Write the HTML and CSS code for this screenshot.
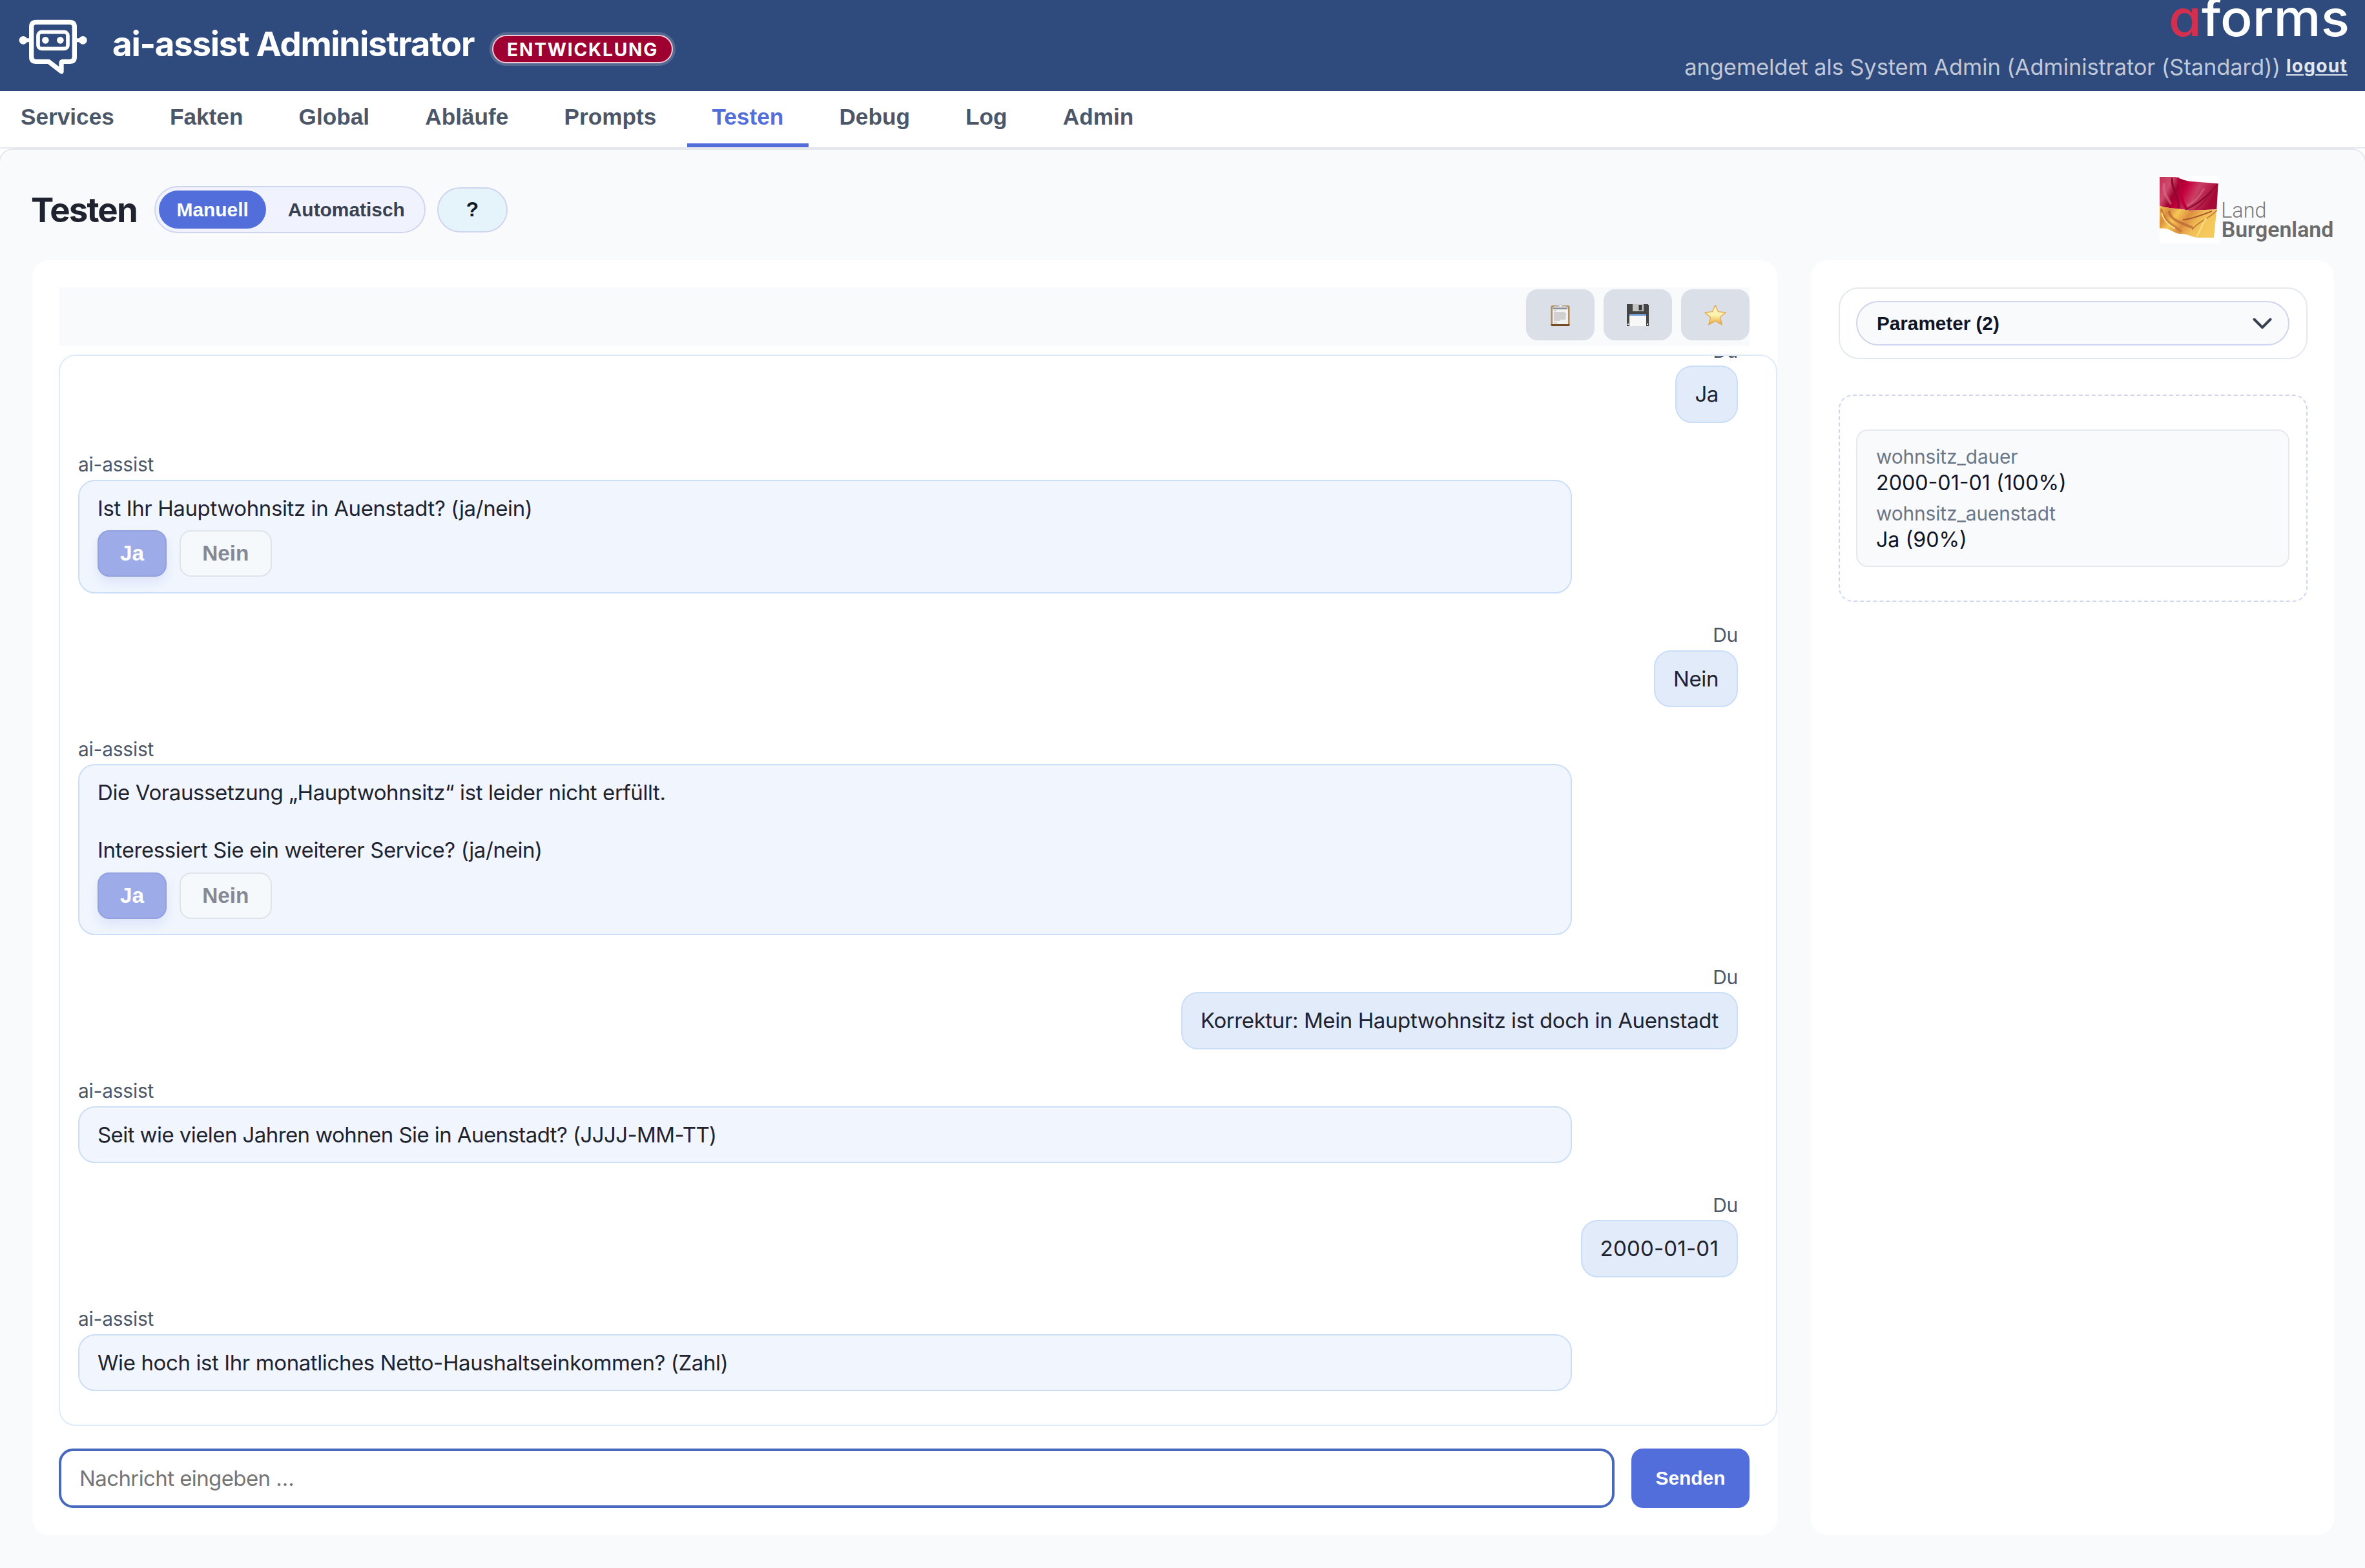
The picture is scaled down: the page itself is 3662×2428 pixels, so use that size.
FILE: index.html
```html
<!DOCTYPE html>
<html lang="de">
  <head>
    <meta charset="UTF-8" />
    <meta name="viewport" content="width=device-width, initial-scale=1.0" />
    <title>ai-assist Administrator</title>
    <link rel="stylesheet" href="styles.css" />
  </head>
  <body>
    <header class="header">
      <div class="brand">
        <svg class="brand-logo" viewBox="0 0 420 330" fill="none" stroke="#fff">
          <path
            d="M108 55H264Q286 55 286 77V216Q286 238 264 238H232Q225 238 225 245V284L166 238H108Q86 238 86 216V77Q86 55 108 55Z"
            stroke-width="22"
            stroke-linejoin="round"
          />
          <rect x="117" y="101" width="138" height="77" rx="16" stroke-width="17" />
          <path d="M47 139H86M286 139H325" stroke-width="18" />
          <g fill="#fff" stroke="none">
            <circle cx="48" cy="139" r="19" />
            <circle cx="325" cy="139" r="19" />
            <circle cx="151" cy="139" r="16" />
            <circle cx="220" cy="139" r="16" />
          </g>
        </svg>
        <h1 class="brand-title">ai-assist Administrator</h1>
        <span class="env-badge">ENTWICKLUNG</span>
      </div>
      <div class="user-area">
        <svg class="aforms-logo" viewBox="0 0 274 57">
          <text x="-3" y="56" textLength="280" lengthAdjust="spacingAndGlyphs">
            <tspan class="aforms-a">a</tspan>forms</text>
        </svg>
        <div class="user-info">
          <span>angemeldet als System Admin (Administrator (Standard))</span>
          <a class="logout" href="#">logout</a>
        </div>
      </div>
    </header>

    <nav class="nav">
      <a class="nav-item" href="#">Services</a>
      <a class="nav-item" href="#">Fakten</a>
      <a class="nav-item" href="#">Global</a>
      <a class="nav-item" href="#">Abläufe</a>
      <a class="nav-item" href="#">Prompts</a>
      <a class="nav-item active" href="#">Testen</a>
      <a class="nav-item" href="#">Debug</a>
      <a class="nav-item" href="#">Log</a>
      <a class="nav-item" href="#">Admin</a>
    </nav>

    <main class="main">
      <div class="page-head">
        <h2 class="page-title">Testen</h2>
        <div class="mode-switch">
          <button class="mode active">Manuell</button>
          <button class="mode">Automatisch</button>
        </div>
        <button class="help">?</button>
        <svg class="land-logo" viewBox="0 0 810 315">
          <defs>
            <linearGradient id="red" x1="0" y1="0" x2="1" y2="0.3">
              <stop offset="0" stop-color="#c23059" />
              <stop offset="0.22" stop-color="#cf4a6c" />
              <stop offset="0.36" stop-color="#a0022f" />
              <stop offset="0.5" stop-color="#c5003f" />
              <stop offset="0.7" stop-color="#ca3f63" />
              <stop offset="1" stop-color="#a80a38" />
            </linearGradient>
            <linearGradient id="gold" x1="0" y1="0" x2="1" y2="0.4">
              <stop offset="0" stop-color="#f3c450" />
              <stop offset="0.2" stop-color="#d98d3e" />
              <stop offset="0.35" stop-color="#f6c754" />
              <stop offset="0.55" stop-color="#dc8f40" />
              <stop offset="0.75" stop-color="#f0bd55" />
              <stop offset="1" stop-color="#f5c95c" />
            </linearGradient>
          </defs>
          <rect width="280" height="315" fill="#fff" />
          <path d="M0 6H72C98 12 108 22 140 26L272 37L265 157L138 162C80 150 30 152 0 140Z" fill="url(#red)" />
          <path d="M0 140C30 152 80 150 138 162L265 157L252 288H182C140 284 130 268 90 270C55 262 45 240 0 245Z" fill="url(#gold)" />
          <g fill="none" stroke-linecap="round">
            <path d="M58 14C52 62 92 92 88 150" stroke="#8e0830" stroke-width="9" />
            <path d="M85 14C110 70 90 100 122 150" stroke="#b8003a" stroke-width="12" />
            <path d="M268 42C230 84 200 118 124 156" stroke="#8b0a30" stroke-width="7" />
            <path d="M255 55C220 110 190 140 168 156" stroke="#9a1038" stroke-width="5" />
            <path d="M205 62C190 90 165 120 130 138" stroke="#d4708a" stroke-width="8" opacity="0.6" />
            <path d="M20 40C15 80 35 100 50 128" stroke="#d4708a" stroke-width="12" opacity="0.6" />
            <path d="M240 166C180 190 150 200 110 205" stroke="#a5532d" stroke-width="6" />
            <path d="M265 162C225 205 180 210 152 250" stroke="#c47336" stroke-width="5" />
            <path d="M8 158C20 215 60 225 98 258" stroke="#c0703a" stroke-width="12" opacity="0.7" />
            <path d="M45 170C50 200 85 215 150 240" stroke="#b86236" stroke-width="12" opacity="0.7" />
            <path d="M10 175C20 210 40 228 70 245" stroke="#fbe08a" stroke-width="6" />
            <path d="M215 200C200 225 190 250 175 278" stroke="#fadb7c" stroke-width="8" />
          </g>
          <text class="land" x="286" y="194" textLength="210" lengthAdjust="spacingAndGlyphs">Land</text>
          <text class="burgenland" x="287" y="285" textLength="521" lengthAdjust="spacingAndGlyphs">Burgenland</text>
        </svg>
      </div>

      <div class="panels">
        <section class="panel chat-panel">
          <div class="toolbar">
            <button class="tool" title="Kopieren">
              <svg class="tool-icon" viewBox="0 0 36 36">
                <rect x="3.5" y="3" width="29" height="32" rx="2.5" fill="#b48a58" />
                <path d="M3.5 32H32.5V33Q32.5 35 30.5 35H5.5Q3.5 35 3.5 33Z" fill="#77491f" />
                <rect x="6" y="6" width="24" height="26" fill="#f1f1f1" />
                <path d="M8 11H12M8 14H25M8 16H27M8 18H27M8 20H26M8 22H27M8 24H26M8 26H18M8 30H13" stroke="#c6c6c6" stroke-width="1.4" />
                <path d="M7 8V6.5Q7 4 10 4H14Q18 -2 22 4H26Q29 4 29 6.5V8Z" fill="#c3c7cc" />
                <path d="M7 8H29" stroke="#777" stroke-width="1.5" />
                <circle cx="18" cy="3.4" r="1.5" fill="#fff" />
              </svg>
            </button>
            <button class="tool" title="Speichern">
              <svg class="tool-icon" viewBox="0 0 36 36">
                <path d="M1 1H33.5L35 2.5V35H1Z" fill="#454545" />
                <rect x="10" y="1" width="17" height="11" fill="#c4c4c4" />
                <rect x="19.5" y="2" width="5" height="8.5" fill="#3b3b3b" />
                <rect x="5" y="16" width="26" height="19" fill="#f7f7f7" />
                <path d="M5 17.5H31" stroke="#5f8fce" stroke-width="2.5" />
                <path d="M2 32H4M32 32H34" stroke="#eee" stroke-width="2" />
              </svg>
            </button>
            <button class="tool" title="Favorit">
              <svg class="tool-icon" viewBox="0 0 36 36">
                <defs>
                  <linearGradient id="star" x1="0" y1="0" x2="0" y2="1">
                    <stop offset="0" stop-color="#fdf3c0" />
                    <stop offset="0.5" stop-color="#fdf4ae" />
                    <stop offset="1" stop-color="#e8a33c" />
                  </linearGradient>
                </defs>
                <path
                  d="M18 2.5L22.4 12.6L34.2 13.8L25.4 21.4L28.3 33L18 27L7.7 33L10.6 21.4L1.8 13.8L13.6 12.6Z"
                  fill="url(#star)"
                  stroke="#e3a550"
                  stroke-width="1.3"
                  stroke-linejoin="round"
                />
              </svg>
            </button>
          </div>

          <div class="chat">
            <div class="msg user">
              <span class="sender">Du</span>
              <div class="bubble">Ja</div>
            </div>
            <div class="msg bot">
              <span class="sender">ai-assist</span>
              <div class="bubble">
                <p>Ist Ihr Hauptwohnsitz in Auenstadt? (ja/nein)</p>
                <div class="answers">
                  <button class="answer yes" disabled>Ja</button>
                  <button class="answer no" disabled>Nein</button>
                </div>
              </div>
            </div>
            <div class="msg user">
              <span class="sender">Du</span>
              <div class="bubble">Nein</div>
            </div>
            <div class="msg bot">
              <span class="sender">ai-assist</span>
              <div class="bubble">
                <p>Die Voraussetzung „Hauptwohnsitz“ ist leider nicht erfüllt.<br /><br />Interessiert Sie ein weiterer Service? (ja/nein)</p>
                <div class="answers">
                  <button class="answer yes" disabled>Ja</button>
                  <button class="answer no" disabled>Nein</button>
                </div>
              </div>
            </div>
            <div class="msg user">
              <span class="sender">Du</span>
              <div class="bubble">Korrektur: Mein Hauptwohnsitz ist doch in Auenstadt</div>
            </div>
            <div class="msg bot">
              <span class="sender">ai-assist</span>
              <div class="bubble tight">Seit wie vielen Jahren wohnen Sie in Auenstadt? (JJJJ-MM-TT)</div>
            </div>
            <div class="msg user">
              <span class="sender">Du</span>
              <div class="bubble number">2000-01-01</div>
            </div>
            <div class="msg bot">
              <span class="sender">ai-assist</span>
              <div class="bubble">Wie hoch ist Ihr monatliches Netto-Haushaltseinkommen? (Zahl)</div>
            </div>
          </div>

          <div class="composer">
            <input class="composer-input" type="text" placeholder="Nachricht eingeben …" />
            <button class="send">Senden</button>
          </div>
        </section>

        <aside class="panel side-panel">
          <div class="param-box">
            <div class="param-summary">
              <span>Parameter (2)</span>
              <svg class="chevron" viewBox="0 0 30 18">
                <path d="M2.5 2.5L15 15L27.5 2.5" fill="none" stroke="#374151" stroke-width="4" stroke-linecap="round" stroke-linejoin="round" />
              </svg>
            </div>
          </div>
          <div class="facts">
            <dl class="fact-list">
              <dt>wohnsitz_dauer</dt>
              <dd>2000-01-01 (100%)</dd>
              <dt>wohnsitz_auenstadt</dt>
              <dd>Ja (90%)</dd>
            </dl>
          </div>
        </aside>
      </div>
    </main>
  </body>
</html>
```
FILE: styles.css
```css
* {
  box-sizing: border-box;
}

body {
  margin: 0;
  height: 2428px;
  display: flex;
  flex-direction: column;
  overflow: hidden;
  background: #fff;
  color: #1f2330;
  font-family: Inter, sans-serif;
  font-size: 33px;
}

h1,
h2,
p,
dl,
dd {
  margin: 0;
}

button {
  border: none;
  padding: 0;
  font-family: "Liberation Sans", Arial, sans-serif;
  font-weight: 700;
  font-size: 29.9px;
}

/* Header */
.header {
  height: 141px;
  flex: none;
  display: flex;
  justify-content: space-between;
  padding: 0 27px 0 20px;
  background: #2f4a7c;
  color: #fff;
}

.brand {
  display: flex;
  align-items: center;
}

.brand-logo {
  width: 140px;
  height: 110px;
  margin-right: 14px;
}

.brand-title {
  padding-bottom: 5px;
  font-size: 52.8px;
  letter-spacing: -1.27px;
  white-space: nowrap;
}

.env-badge {
  width: 280px;
  height: 44px;
  margin: 11px 0 0 28px;
  border: 2px solid #f3c9d3;
  border-radius: 22px;
  box-shadow: 0 0 0 4px rgba(255, 255, 255, 0.18);
  background: #9e0031;
  font-size: 28.2px;
  font-weight: 700;
  letter-spacing: 1.75px;
  line-height: 42px;
  text-align: center;
}

.user-area {
  display: flex;
  flex-direction: column;
  align-items: flex-end;
}

.aforms-logo {
  width: 274px;
  height: 57px;
  overflow: visible;
  fill: #fff;
  font-size: 78px;
  font-weight: 500;
}

.aforms-a {
  fill: #d3304f;
  font-feature-settings: "cv11";
}

.user-info {
  display: flex;
  align-items: center;
  gap: 9px;
  margin-top: 24px;
  color: #c1c9d8;
  font-size: 34.5px;
  letter-spacing: -0.1px;
  line-height: 42px;
}

.logout {
  margin-bottom: 3px;
  color: #e1e6ef;
  font-size: 28.2px;
  font-weight: 700;
  letter-spacing: 1.2px;
  text-decoration-thickness: 2px;
  text-underline-offset: 3px;
}

/* Navigation */
.nav {
  flex: none;
  display: flex;
  gap: 9.2px;
  height: 89px;
  border-bottom: 2px solid #e5e7ee;
}

.nav-item {
  padding: 0 38.5px 2px;
  border-bottom: 6px solid transparent;
  color: #4b5768;
  font-family: "Liberation Sans", Arial, sans-serif;
  font-size: 35.2px;
  font-weight: 700;
  line-height: 79px;
  text-decoration: none;
}

.nav-item:first-child {
  padding-left: 32px;
}

.nav-item.active {
  border-bottom-color: #526edb;
  color: #526edb;
}

/* Page */
.main {
  flex: 1;
  margin: 0 -2px;
  padding: 38px 48px 0 50px;
  border: 2px solid #e5e7ee;
  border-bottom: none;
  border-radius: 22px 22px 0 0;
  background: #f9fafc;
}

.page-head {
  display: flex;
  align-items: center;
  height: 109px;
  margin-bottom: 24px;
}

.page-title {
  width: 191px;
  margin-left: -2px;
  font-size: 52.8px;
  letter-spacing: -1.9px;
}

.mode-switch {
  display: flex;
  gap: 6px;
  width: 420px;
  height: 73px;
  padding: 5px;
  border: 2px solid #d0d5ef;
  border-radius: 37px;
  background: #f0f2fd;
}

.mode {
  padding: 0 27.5px;
  border-radius: 30px;
  background: none;
  color: #374151;
}

.mode.active {
  background: #526edb;
  color: #fff;
}

.help {
  width: 109px;
  height: 70px;
  margin-left: 18px;
  border: 2px solid #d0d5ef;
  border-radius: 35px;
  background: #e5f3fb;
  color: #111827;
  font-size: 31.7px;
}

.land-logo {
  width: 270px;
  height: 105px;
  margin-left: auto;
  overflow: visible;
}

.land {
  fill: #777;
  font: 300 100px Roboto, sans-serif;
}

.burgenland {
  fill: #6b6b6b;
  font: 600 100px Roboto, sans-serif;
}

.panels {
  display: flex;
  gap: 52px;
  height: 1974px;
}

.panel {
  padding: 42px 43px 42px 41px;
  border-radius: 26px;
  background: #fff;
}

.chat-panel {
  width: 2702px;
  display: flex;
  flex-direction: column;
}

.toolbar {
  display: flex;
  justify-content: flex-end;
  gap: 14px;
  height: 91px;
  padding-top: 3px;
  background: #f9fafc;
}

.tool {
  display: flex;
  align-items: center;
  justify-content: center;
  width: 106px;
  height: 79px;
  border-radius: 18px;
  background: #dbdfe7;
}

.tool-icon {
  width: 36px;
  height: 36px;
}

/* Chat history, always scrolled to the newest message */
.chat {
  display: flex;
  flex-direction: column;
  justify-content: flex-end;
  height: 1659px;
  margin: 13px -43px 35px 0;
  padding: 0 59px 52px 28px;
  overflow: hidden;
  border: 2px solid #e0ebf9;
  border-radius: 26px;
}

.msg {
  flex: none;
  display: flex;
  flex-direction: column;
  align-items: flex-start;
  padding-top: 45.6px;
}

.msg.user {
  align-items: flex-end;
}

.sender {
  margin-bottom: 4.5px;
  color: #4b5768;
  font-size: 29.9px;
  letter-spacing: -0.2px;
  line-height: 38px;
}

.bubble {
  padding: 20px 28px;
  border: 2px solid #cadef7;
  border-radius: 26px;
  background: #e1ebfa;
  letter-spacing: -0.4px;
  line-height: 44.4px;
}

.bubble.tight {
  letter-spacing: -0.58px;
}

.bubble.number {
  letter-spacing: 0.2px;
}

.bot .bubble {
  width: 2313px;
  background: #f1f6fe;
}

.answers {
  display: flex;
  gap: 20px;
  margin: 12.3px 0 3.3px;
}

.answer {
  height: 72px;
  padding: 0 33px;
  border: 2px solid #dfe4ea;
  border-radius: 18px;
  font-size: 33.4px;
}

.answer.yes {
  border-color: #93a1df;
  background: #9dabe8;
  box-shadow: 0 9px 18px rgba(82, 110, 219, 0.13);
  color: #fff;
}

.answer.no {
  background: #f5f9fc;
  color: #838995;
}

.composer {
  display: flex;
  gap: 26px;
  height: 92px;
}

.composer-input {
  flex: 1;
  padding: 0 28px;
  border: 4px solid #4668bf;
  border-radius: 22px;
  outline: none;
  font-family: Inter, sans-serif;
  font-size: 33px;
  letter-spacing: -0.6px;
}

.composer-input::placeholder {
  color: #757575;
}

.send {
  width: 183px;
  border-radius: 18px;
  background: #526edb;
  color: #fff;
}

/* Right column */
.side-panel {
  width: 810px;
}

.param-box {
  width: 726px;
  height: 111px;
  margin: 0 0 55px 2px;
  padding: 19px 26px 19px 25px;
  border: 2px solid #e5e8ee;
  border-radius: 31px;
}

.param-summary {
  display: flex;
  align-items: center;
  justify-content: space-between;
  height: 69px;
  padding: 0 25px 0 30px;
  border: 2px solid #d0d5ef;
  border-radius: 35px;
  background: #f9fafc;
  color: #0f1526;
  font-family: "Liberation Sans", Arial, sans-serif;
  font-size: 29.7px;
  font-weight: 700;
}

.chevron {
  width: 30px;
  height: 18px;
}

.facts {
  width: 726px;
  height: 321px;
  margin-left: 2px;
  padding: 52px 26px 52px 25px;
  border: 2px dashed #d0d5ef;
  border-radius: 22px;
}

.fact-list {
  height: 213px;
  padding: 20px 29px;
  border: 2px solid #e5e8ee;
  border-radius: 18px;
  background: #f9fafc;
}

.fact-list dt {
  color: #6b7688;
  font-size: 29.9px;
  letter-spacing: -0.15px;
  line-height: 40px;
}

.fact-list dd {
  margin-bottom: 7px;
  color: #0f1526;
  font-size: 32.2px;
  line-height: 41px;
}
```
